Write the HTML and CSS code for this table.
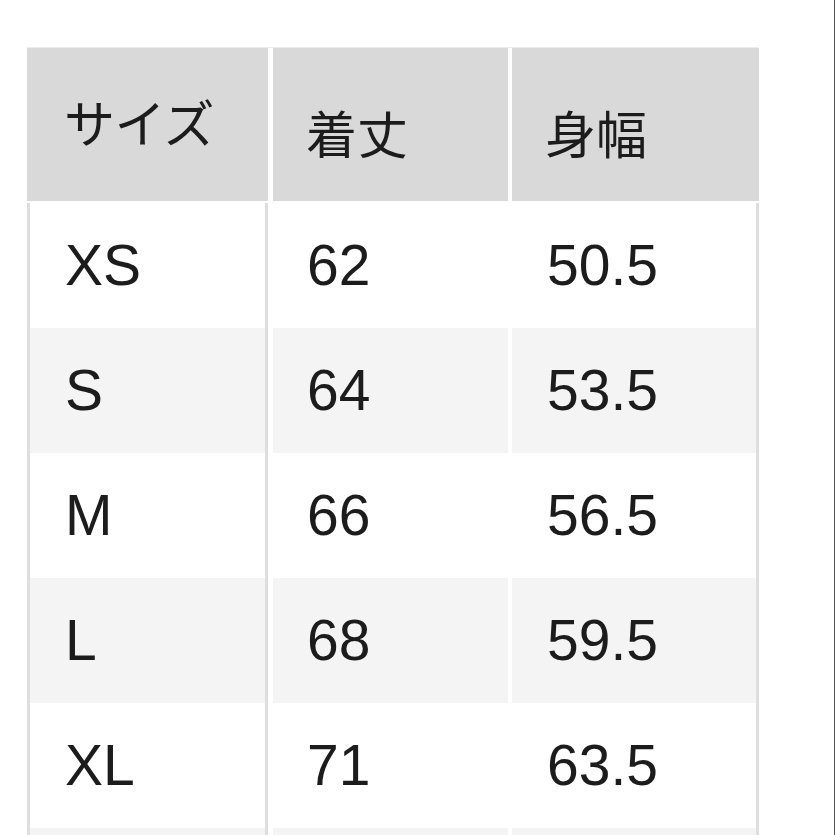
FILE: index.html
```html
<!DOCTYPE html>
<html lang="ja">
<head>
<meta charset="utf-8">
<title>サイズ表</title>
<link rel="stylesheet" href="styles.css">
</head>
<body>
<div class="page">
  <div class="size-table">
    <div class="row head">
      <div class="cell c1"><span class="jp first">サイズ</span></div>
      <div class="cell c2"><span class="jp">着丈</span></div>
      <div class="cell c3"><span class="jp">身幅</span></div>
    </div>
    <div class="row">
      <div class="cell c1">XS</div>
      <div class="cell c2">62</div>
      <div class="cell c3">50.5</div>
    </div>
    <div class="row alt">
      <div class="cell c1">S</div>
      <div class="cell c2">64</div>
      <div class="cell c3">53.5</div>
    </div>
    <div class="row">
      <div class="cell c1">M</div>
      <div class="cell c2">66</div>
      <div class="cell c3">56.5</div>
    </div>
    <div class="row alt">
      <div class="cell c1">L</div>
      <div class="cell c2">68</div>
      <div class="cell c3">59.5</div>
    </div>
    <div class="row">
      <div class="cell c1">XL</div>
      <div class="cell c2">71</div>
      <div class="cell c3">63.5</div>
    </div>
    <div class="row alt">
      <div class="cell c1"></div>
      <div class="cell c2"></div>
      <div class="cell c3"></div>
    </div>
  </div>
</div>
</body>
</html>
```

FILE: styles.css
```css
html, body {
  margin: 0;
  padding: 0;
  background: #ffffff;
}
body {
  height: 835px;
  overflow: hidden;
}
.page {
  box-sizing: border-box;
  width: 835px;
  height: 835px;
  padding: 47px 0 0 27px;
  border-right: 1px solid #555555;
  overflow: hidden;
}
.size-table {
  width: 731px;
  font-family: "Liberation Sans", Arial, sans-serif;
  color: #1c1c1c;
}
.row {
  display: grid;
  grid-template-columns: 241px 235px 246px;
  column-gap: 5px;
  height: 125px;
}
.row > .c3 { margin-left: -1px; }
.cell {
  box-sizing: border-box;
  display: flex;
  align-items: center;
  font-size: 57px;
  line-height: 1;
  background: #ffffff;
}
.c1 {
  padding-left: 35px;
  border-left: 3px solid #dedede;
  border-right: 3px solid #dedede;
}
.c2 { padding-left: 34px; }
.c3 {
  padding-left: 35px;
  border-right: 3px solid #dedede;
}
.alt .cell { background: #f4f4f4; }
.head {
  height: 153px;
  margin-bottom: 2px;
  border-top: 1px solid #ececec;
}
.head .cell {
  background: #d9d9d9;
  border: none;
}
.head .c1 { padding-left: 37px; }
.head .c2 { padding-left: 33px; }
.head .c3 { padding-left: 33px; }
.jp {
  font-family: "Noto Sans CJK JP", "Noto Sans", sans-serif;
  font-size: 51px;
  line-height: 1;
  position: relative;
  top: 8px;
}
.jp.first { top: -3px; letter-spacing: -0.5px; }
```
